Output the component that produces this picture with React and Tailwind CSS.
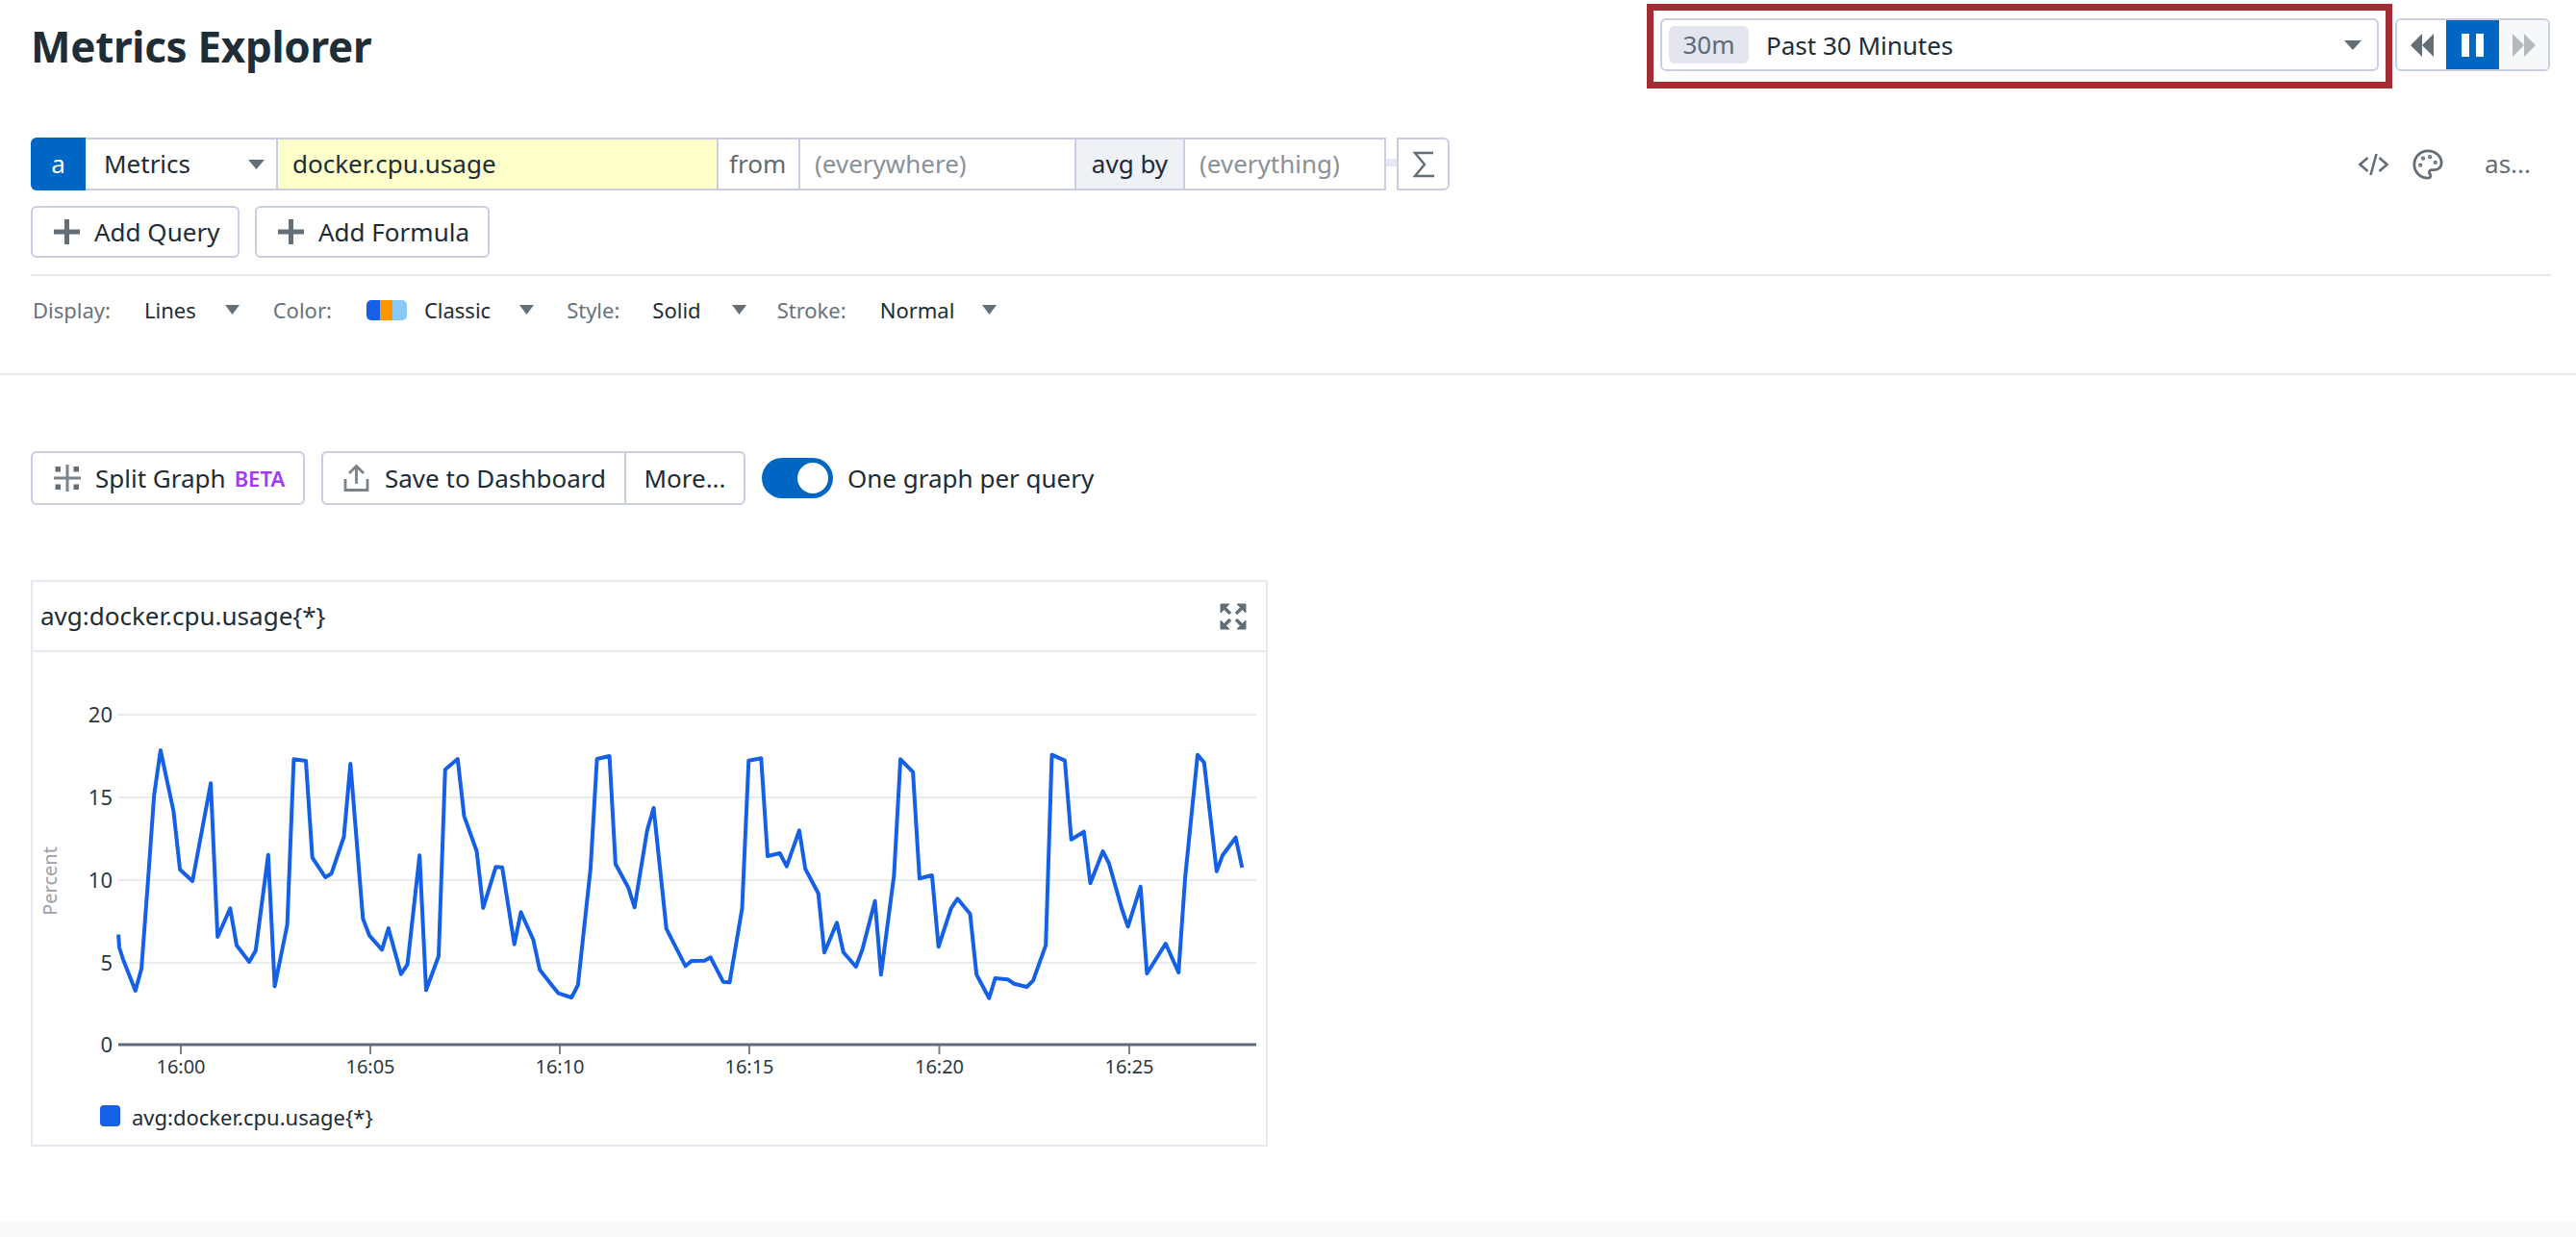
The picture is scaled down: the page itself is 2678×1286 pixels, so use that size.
import React from "react";
import { Palette } from "lucide-react";

const P1 = [[245,815],[247,855],[256,890],[287,990],[302,920],[318,650],[333,380],[349,240],[381,430],[397,612],[428,648],[473,343],[490,822],[521,733],[537,848],[568,900],[584,865],[615,566],[631,976],[662,785],[678,268],[708,273],[724,575],[756,636],[771,625],[802,510],[818,282],[849,765],[865,818],[896,862],[912,795],[943,938],[959,908],[989,568],[1005,988],[1036,882],[1052,300],[1083,267],[1099,445],[1130,555],[1146,732],[1177,604],[1193,605],[1223,845],[1239,745],[1270,832],[1286,925],[1317,975],[1332,998],[1364,1011],[1380,973],[1411,610],[1427,267],[1458,258],[1473,595],[1505,670],[1520,730],[1551,490],[1567,420]];
const P2 = [[78,797],[125,913],[140,897],[172,896],[187,886],[218,962],[234,964],[265,733],[281,272],[312,265],[328,570],[358,561],[375,602],[406,490],[421,610],[453,686],[468,871],[499,778],[515,870],[546,915],[562,862],[593,710],[608,940],[640,630],[656,268],[687,308],[703,640],[734,630],[750,853],[781,733],[797,703],[828,750],[844,940],[875,1013],[890,951],[921,955],[937,968],[968,978],[984,958],[1015,848],[1030,254],[1062,272],[1078,518],[1109,494],[1125,655],[1156,555],[1171,592],[1203,735],[1218,790],[1249,665],[1265,936],[1311,843],[1343,933],[1359,640],[1390,254],[1406,278],[1437,617],[1452,567],[1484,512],[1500,606]];
// Chart svg origin is page (34, 678)
const toPts = () => {
  const a = P1.map(([x, y]) => [20 + x / 2.376 - 34, 700 + y / 3 - 678]);
  const b = P2.map(([x, y]) => [660 + x / 2.376 - 34, 700 + y / 3 - 678]);
  return a.concat(b).map(([x, y]) => `${x.toFixed(1)},${y.toFixed(1)}`).join(" ");
};

const Caret = ({ className = "", w = 17 }) => (
  <svg width={w} height="10" viewBox="0 0 16 10" preserveAspectRatio="none" className={`shrink-0 ${className}`}><path d="M0 0h16L8 10z" fill="#646e77" /></svg>
);
const Plus = () => (
  <svg width="27" height="26" viewBox="0 0 27 26" className="shrink-0"><path d="M11 0h5v10.500h11v5H16v10.500h-5V15.500H0v-5h11z" fill="#646e77" /></svg>
);

const Opt = ({ label, value, swatch, gap, after }) => (
  <div className="flex items-center">
    <span className="text-[22px] text-[#6a737b]">{label}</span>
    {swatch}
    <span className={`text-[22px] text-[#1e2c35] ${gap}`}>{value}</span>
    <Caret w={15} className={after} />
  </div>
);

export default function App() {
  return (
    <div className="w-full h-[1286px] bg-white flex flex-col overflow-hidden text-[#1e2c35] font-['Noto_Sans',sans-serif]">
      {/* Header */}
      <div className="h-[143px] shrink-0 flex justify-between items-start pl-[32px] pr-[27px] pt-[4px]">
        <h1 className="text-[44px] leading-[60px] font-bold tracking-[-0.3px] mt-[14px] text-[#1f2d36]">Metrics Explorer</h1>
        <div className="flex items-start gap-[3px]">
          <div className="w-[775px] h-[88px] border-[7px] border-[#a52c35] pl-[7px] pr-[7px] pt-[8px]">
            <div className="h-[55px] border-2 border-[#c9cee2] rounded-[6px] flex items-center pl-[7px] pr-[16px]">
              <span className="w-[83px] h-[39px] rounded-[6px] bg-[#e3e6ee] text-[26px] text-[#5f6a73] flex items-center justify-center">30m</span>
              <span className="text-[26px] ml-[18px] pt-[2px]">Past 30 Minutes</span>
              <Caret w={18} className="ml-auto" />
            </div>
          </div>
          <div className="mt-[15px] w-[161px] h-[55px] border-2 border-[#c9cee2] rounded-[6px] flex overflow-hidden">
            <div className="w-[51px] flex items-center justify-center bg-white">
              <svg width="26" height="24" viewBox="0 0 26 24"><path d="M13 0v24L1 12zM25 0v24L13 12z" fill="#646e77" /></svg>
            </div>
            <div className="w-[55px] bg-[#0066c4] flex items-center justify-center gap-[7px]">
              <span className="w-[8px] h-[24px] bg-white" />
              <span className="w-[8px] h-[24px] bg-white" />
            </div>
            <div className="flex-1 bg-[#f7f8fa] flex items-center justify-center">
              <svg width="26" height="24" viewBox="0 0 26 24"><path d="M1 0v24l12-12zM13 0v24l12-12z" fill="#b3b9bd" /></svg>
            </div>
          </div>
        </div>
      </div>

      {/* Query row */}
      <div className="h-[55px] shrink-0 flex items-stretch pl-[32px] pr-[27px]">
        <div className="w-[57px] bg-[#0066c4] rounded-l-[6px] text-white text-[26px] flex items-center justify-center">a</div>
        <div className="flex border-y-2 border-[#c9cee2] text-[26px]">
          <div className="w-[198px] flex items-center pl-[19px] pr-[12px] justify-between">
            <span>Metrics</span><Caret />
          </div>
          <div className="w-[458px] bg-[#ffffcc] border-l-2 border-[#c9cee2] flex items-center pl-[15px]">docker.cpu.usage</div>
          <div className="w-[85px] border-l-2 border-[#c9cee2] flex items-center pl-[11px] text-[#5f6a73]">from</div>
          <div className="w-[287px] border-l-2 border-[#c9cee2] flex items-center pl-[15px] text-[#8a9299]">(everywhere)</div>
          <div className="w-[113px] bg-[#eef1f6] border-l-2 border-[#c9cee2] flex items-center justify-center">avg by</div>
          <div className="w-[211px] border-x-2 border-[#c9cee2] flex items-center pl-[15px] text-[#8a9299]">(everything)</div>
        </div>
        <div className="w-[11px] h-[8px] self-center -mt-[4px] bg-[#e6e9f1]" />
        <div className="w-[55px] border-2 border-[#c9cee2] rounded-r-[6px] flex items-center justify-center">
          <svg width="22" height="28" viewBox="0 0 22 28" fill="none"><path d="M21 2H2l10 12L2 26h20" stroke="#646e77" strokeWidth="2.400" /></svg>
        </div>
        <div className="ml-auto flex items-center text-[#646e77]">
          <svg width="31" height="24" viewBox="0 0 31 24" fill="none" stroke="#646e77" strokeWidth="2.600"><path d="M9.500 5l-8 7 8 7M21.500 5l8 7-8 7M18.500 1l-6 22" /></svg>
          <Palette size={34} strokeWidth={2} color="#646e77" className="ml-[24px]" />
          <span className="text-[26px] ml-[42px] mr-[20px]">as...</span>
        </div>
      </div>

      {/* Add buttons */}
      <div className="mt-[16px] h-[54px] shrink-0 flex gap-[16px] pl-[32px]">
        <button className="w-[217px] border-2 border-[#c9cee2] rounded-[6px] flex items-center pl-[22px] text-[26px] gap-[15px]"><Plus />Add Query</button>
        <button className="w-[244px] border-2 border-[#c9cee2] rounded-[6px] flex items-center pl-[22px] text-[26px] gap-[15px]"><Plus />Add Formula</button>
      </div>

      <div className="mt-[17px] ml-[32px] mr-[26px] h-[2px] shrink-0 bg-[#e6e9ef]" />

      {/* Display options */}
      <div className="h-[101px] shrink-0 pl-[34px] pt-[18px]">
        <div className="h-[34px] flex items-center">
          <Opt label="Display:" value="Lines" gap="ml-[35px]" after="ml-[30px]" />
          <div className="ml-[35px]">
            <Opt label="Color:" value="Classic" gap="ml-[18px]" after="ml-[30px]" swatch={
              <span className="ml-[36px] w-[42px] h-[21px] flex rounded-[5px] overflow-hidden">
                <span className="w-[14px] bg-[#1460e6]" />
                <span className="w-[13px] bg-[#ff9800]" />
                <span className="w-[15px] bg-[#8cc8f5]" />
              </span>
            } />
          </div>
          <div className="ml-[34px]">
            <Opt label="Style:" value="Solid" gap="ml-[34px]" after="ml-[32px]" />
          </div>
          <div className="ml-[32px]">
            <Opt label="Stroke:" value="Normal" gap="ml-[35px]" after="ml-[29px]" />
          </div>
        </div>
      </div>

      <div className="h-[2px] shrink-0 bg-[#e6e9ef]" />

      {/* Actions */}
      <div className="mt-[79px] h-[56px] shrink-0 flex items-center pl-[32px]">
        <button className="w-[285px] h-full border-2 border-[#c9cee2] rounded-[6px] flex items-center pl-[22px] text-[26px]">
          <svg width="28" height="28" viewBox="0 0 28 28" className="shrink-0" fill="#7a838a">
            <path d="M12.500 0h3v28h-3zM0 12.500h28v3H0z" />
            <path d="M1.500 2h5.500v5.500H1.500zM20.500 2H26v5.500h-5.500zM1.500 20.500h5.500V26H1.500zM20.500 20.500H26V26h-5.500z" fill="#646e77" />
          </svg>
          <span className="ml-[15px]">Split Graph</span>
          <span className="ml-[9px] text-[22px] font-semibold text-[#a33cf0]">BETA</span>
        </button>
        <div className="ml-[17px] w-[441px] h-full border-2 border-[#c9cee2] rounded-[6px] flex text-[26px]">
          <div className="w-[313px] flex items-center pl-[21px]">
            <svg width="27" height="28" viewBox="0 0 27 28" fill="none" stroke="#7a838a" strokeWidth="2.800" className="shrink-0">
              <path d="M13.500 20V2M6 9l7.500-7.500L21 9" />
              <path d="M2 15v11.500h23V15" />
            </svg>
            <span className="ml-[16px]">Save to Dashboard</span>
          </div>
          <div className="flex-1 border-l-2 border-[#c9cee2] flex items-center justify-center">More...</div>
        </div>
        <div className="ml-[17px] w-[74px] h-[42px] rounded-full bg-[#0066c4] flex items-center justify-end pr-[5px]">
          <span className="w-[32px] h-[32px] rounded-full bg-white" />
        </div>
        <span className="ml-[15px] text-[26px]">One graph per query</span>
      </div>

      {/* Graph card */}
      <div className="mt-[78px] ml-[32px] w-[1286px] h-[589px] shrink-0 border-2 border-[#e6e9ef] flex flex-col">
        <div className="h-[73px] shrink-0 border-b-2 border-[#e6e9ef] flex items-center justify-between pl-[8px] pr-[20px]">
          <span className="text-[26px]">{"avg:docker.cpu.usage{*}"}</span>
          <svg width="28" height="28" viewBox="0 0 28 28" fill="#646e77" stroke="#646e77">
            <path d="M1 1h9l-9 9z M27 1h-9l9 9z M1 27h9l-9-9z M27 27h-9l9-9z" strokeWidth="1" />
            <path d="M4 4l7 7M24 4l-7 7M4 24l7-7M24 24l-7-7" strokeWidth="3.500" fill="none" />
          </svg>
        </div>
        <svg width="1282" height="450" viewBox="0 0 1282 450" className="shrink-0 block">
          {[65, 151, 237, 323].map((y) => (
            <line key={y} x1="89" x2="1272" y1={y} y2={y} stroke="#e9ebef" strokeWidth="2" />
          ))}
          {[["20", 65], ["15", 151], ["10", 237], ["5", 323], ["0", 408]].map(([t, y]) => (
            <text key={t} x="83" y={y + 8} textAnchor="end" fontSize="22" fill="#2c3942" fontFamily="'Noto Sans',sans-serif">{t}</text>
          ))}
          <text transform="translate(25 238) rotate(-90)" textAnchor="middle" fontSize="20" fill="#9aa1a7" fontFamily="'Noto Sans',sans-serif">Percent</text>
          {[["16:00", 154], ["16:05", 351], ["16:10", 548], ["16:15", 745], ["16:20", 942.5], ["16:25", 1140]].map(([t, x]) => (
            <g key={t}>
              <line x1={x} x2={x} y1="408" y2="418" stroke="#7a838a" strokeWidth="2" />
              <text x={x} y="438" textAnchor="middle" fontSize="20" fill="#2c3942" fontFamily="'Noto Sans',sans-serif">{t}</text>
            </g>
          ))}
          <line x1="89" x2="1272" y1="408" y2="408" stroke="#5f6a82" strokeWidth="3" />
          <polyline points={toPts()} fill="none" stroke="#1460e6" strokeWidth="4" strokeLinejoin="round" />
        </svg>
        <div className="flex-1 flex items-start pl-[70px] pt-[21px]">
          <span className="w-[21px] h-[22px] rounded-[4px] bg-[#1460e6]" />
          <span className="ml-[12px] text-[22px] leading-[24px]">{"avg:docker.cpu.usage{*}"}</span>
        </div>
      </div>

      <div className="mt-auto h-[15px] shrink-0 bg-[#f8f9fb]" />
    </div>
  );
}
